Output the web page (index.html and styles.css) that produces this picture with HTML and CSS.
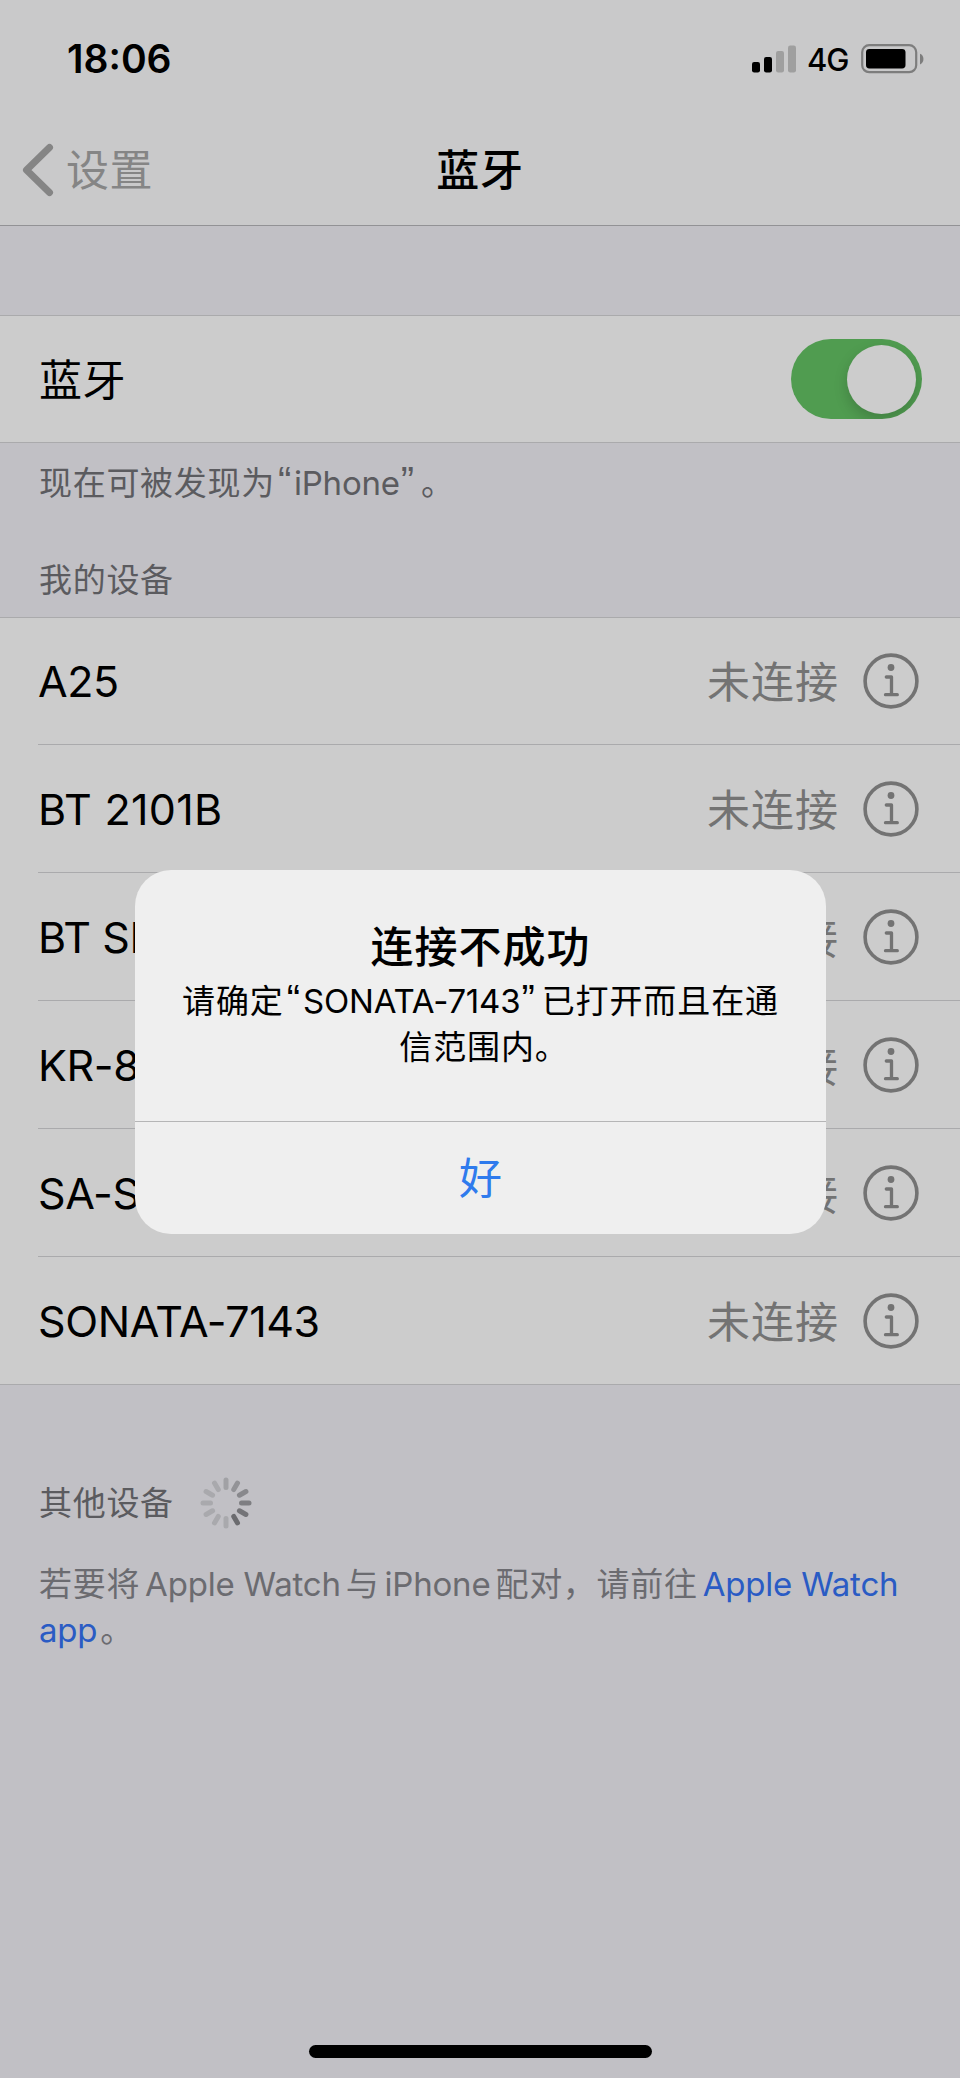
FILE: index.html
```html
<!DOCTYPE html>
<html lang="zh-CN">
<head>
<meta charset="utf-8">
<title>蓝牙</title>
<link rel="stylesheet" href="styles.css">
</head>
<body>
<svg class="defs" aria-hidden="true">
  <symbol id="info" viewBox="0 0 56 56">
    <circle cx="28" cy="28" r="25.9" fill="none" stroke="currentColor" stroke-width="3.6"/>
    <circle cx="28" cy="14.5" r="3.4" fill="currentColor"/>
    <path d="M23.3 24h5.200v17.700M22.500 41.700h11.800" fill="none" stroke="currentColor" stroke-width="3.300" stroke-linecap="round" stroke-linejoin="round"/>
  </symbol>
</svg>
<div class="screen">
  <header class="header">
    <div class="status">
      <span class="time">18:06</span>
      <div class="indicators">
        <svg class="signal" width="44" height="28" viewBox="0 0 44 28">
          <rect x="0" y="17" width="8" height="10.5" rx="2.2"/>
          <rect x="12" y="12" width="8" height="15.5" rx="2.2"/>
          <rect class="off" x="24" y="6" width="8" height="21.5" rx="2.2"/>
          <rect class="off" x="36" y="0.5" width="8" height="27" rx="2.2"/>
        </svg>
        <span class="network">4G</span>
        <svg class="battery" width="63" height="30" viewBox="0 0 63 30">
          <rect x="1.2" y="1.2" width="54" height="27" rx="7" fill="none" stroke="#7d7d7d" stroke-width="2.2"/>
          <rect x="5" y="5" width="39.5" height="19.5" rx="3.4" fill="#000"/>
          <path d="M59 9.8c4.6 1.6 4.6 9 0 10.600z" fill="#7d7d7d"/>
        </svg>
      </div>
    </div>
    <nav class="nav">
      <div class="back">
        <svg width="32" height="54" viewBox="0 0 32 54"><path d="M27.500 4.500L4.500 27l23 22.500" fill="none" stroke="currentColor" stroke-width="7" stroke-linecap="round" stroke-linejoin="round"/></svg>
        <span>设置</span>
      </div>
      <h1 class="title">蓝牙</h1>
    </nav>
  </header>
  <main>
    <section class="group toggle-row">
      <span class="toggle-label">蓝牙</span>
      <span class="switch"><span class="knob"></span></span>
    </section>
    <p class="note">现在可被发现为<span class="open">“</span><span class="lat">iPhone</span><span class="close">”</span>。</p>
    <h2 class="label">我的设备</h2>
    <ul class="group devices">
      <li class="device"><span class="name tight">A25</span><span class="state">未连接</span><svg class="info"><use href="#info"/></svg></li>
      <li class="device"><span class="name">BT 2101B</span><span class="state">未连接</span><svg class="info"><use href="#info"/></svg></li>
      <li class="device"><span class="name tight">BT SP</span><span class="state">未连接</span><svg class="info"><use href="#info"/></svg></li>
      <li class="device"><span class="name tight">KR-8</span><span class="state">未连接</span><svg class="info"><use href="#info"/></svg></li>
      <li class="device"><span class="name tight">SA-S</span><span class="state">未连接</span><svg class="info"><use href="#info"/></svg></li>
      <li class="device"><span class="name tight">SONATA-7143</span><span class="state">未连接</span><svg class="info"><use href="#info"/></svg></li>
    </ul>
    <div class="others">
      <h2 class="label">其他设备</h2>
      <svg class="spinner" width="52" height="52" viewBox="-26 -26 52 52" fill="none" stroke-width="5" stroke-linecap="round">
        <path d="M0-15.500V-23" stroke="#a1a1a5"/>
        <path d="M0-15.500V-23" stroke="#939397" transform="rotate(30)"/>
        <path d="M0-15.500V-23" stroke="#88888c" transform="rotate(60)"/>
        <path d="M0-15.500V-23" stroke="#7e7e82" transform="rotate(90)"/>
        <path d="M0-15.500V-23" stroke="#747478" transform="rotate(120)"/>
        <path d="M0-15.500V-23" stroke="#6b6b6f" transform="rotate(150)"/>
        <path d="M0-15.500V-23" stroke="#a9a9ad" transform="rotate(180)"/>
        <path d="M0-15.500V-23" stroke="#a9a9ad" transform="rotate(210)"/>
        <path d="M0-15.500V-23" stroke="#a9a9ad" transform="rotate(240)"/>
        <path d="M0-15.500V-23" stroke="#a9a9ad" transform="rotate(270)"/>
        <path d="M0-15.500V-23" stroke="#a9a9ad" transform="rotate(300)"/>
        <path d="M0-15.500V-23" stroke="#a9a9ad" transform="rotate(330)"/>
      </svg>
    </div>
    <p class="watch">若要将<span class="gap"></span><span class="lat">Apple Watch</span><span class="gap"></span>与<span class="gap"></span><span class="lat">iPhone</span><span class="gap"></span>配对，请前往<span class="gap"></span><a class="lat">Apple Watch</a><br><a class="lat app">app</a>。</p>
  </main>
  <div class="alert" role="alertdialog">
    <div class="message">
      <h3>连接不成功</h3>
      <p>请确定<span class="open">“</span><span class="lat">SONATA-7143</span><span class="close">”</span>已打开而且在通<br><span class="tail">信范围内。</span></p>
    </div>
    <button class="ok">好</button>
  </div>
  <div class="home"></div>
</div>
</body>
</html>
```
FILE: styles.css
```css
* { box-sizing: border-box; margin: 0; padding: 0; }
body {
  font-family: Inter, "Noto Sans CJK SC", sans-serif;
  font-size: 43px;
  font-weight: 400;
  color: #000;
  background: #c1c0c5;
}
.defs { position: absolute; width: 0; height: 0; }
.screen { position: relative; width: 960px; height: 2078px; overflow: hidden; background: #c1c0c5; }
.header { height: 226px; background: #c9c9ca; border-bottom: 1px solid #929295; }
.status { display: flex; justify-content: space-between; height: 114px; padding: 29px 36px 0 67px; }
.time { font-size: 39px; font-weight: 600; line-height: 60px; }
.indicators { display: flex; height: 60px; align-items: center; }
.signal .off { fill: #9f9f9f; }
.network { width: 42px; margin: 2px 12px 0 11px; font-size: 31px; line-height: 40px; font-weight: 500; letter-spacing: -1px; }
.nav { display: grid; grid-template-columns: 1fr auto 1fr; align-items: center; height: 111px; padding: 0 22px; }
.back { display: flex; align-items: center; gap: 12px; color: #858585; letter-spacing: .5px; line-height: 60px; }
.title { font-size: 43px; font-weight: 500; line-height: 60px; letter-spacing: .8px; }
.group { background: #ccc; border-top: 1px solid #aaaaac; border-bottom: 1px solid #aaaaac; }
.toggle-row { display: flex; align-items: center; justify-content: space-between; height: 128px; margin-top: 89px; padding: 0 38px 0 39px; letter-spacing: .5px; }
.toggle-label { padding-bottom: 5px; }
.switch { display: flex; justify-content: flex-end; width: 131px; height: 80px; padding: 6px; border-radius: 40px; background: #509c50; overflow: hidden; }
.knob { width: 69px; height: 69px; border-radius: 50%; background: #ccc; box-shadow: 0 6px 14px rgba(0, 0, 0, .18); }
.note, .label, .watch { font-size: 33px; font-weight: 400; color: #5b5b5f; letter-spacing: .7px; line-height: 46px; }
.note { margin: 17px 0 0 39px; }
.note + .label { margin: 51px 0 0 39px; }
.lat { letter-spacing: -.2px; }
.open, .close { font-family: "Liberation Sans", sans-serif; font-size: 40px; line-height: 1; }
.open { margin: 0 2px 0 3px; }
.close { margin: 0 6px 0 1px; }
.devices { list-style: none; margin-top: 14px; padding-left: 38px; }
.device { display: flex; align-items: center; height: 128px; padding-right: 41px; border-bottom: 1px solid #aaaaac; }
.device:first-child { height: 127px; }
.device:last-child { height: 127px; border-bottom: 0; }
.name { flex: 1; letter-spacing: .3px; }
.name.tight { letter-spacing: -.4px; }
.state { color: #737373; letter-spacing: 1px; margin-right: 24px; padding-bottom: 4px; }
.info { width: 56px; height: 56px; color: #737373; }
.others { display: flex; align-items: center; gap: 28px; margin: 92px 0 0 39px; }
.others .label { width: 133px; white-space: nowrap; }
.watch { margin: 32px 0 0 39px; color: #6b6b70; white-space: nowrap; }
.watch a { color: #2a5bc4; }
.watch .app { margin-right: 3px; }
.gap { display: inline-block; width: 5px; }
.alert { position: absolute; left: 135px; top: 870px; width: 691px; height: 364px; border-radius: 36px; background: #efefef; overflow: hidden; text-align: center; }
.message { height: 252px; padding-top: 47px; border-bottom: 1px solid #b5b5b6; }
.message h3 { margin-bottom: 1px; font-size: 43px; font-weight: 500; line-height: 60px; letter-spacing: 1px; }
.message p { font-size: 33px; line-height: 46px; letter-spacing: .9px; white-space: nowrap; }
.tail { padding-left: 7px; }
.ok { display: block; width: 100%; height: 112px; padding-bottom: 6px; border: 0; background: none; font: inherit; color: #2f7bed; }
.home { position: absolute; left: 309px; top: 2045px; width: 343px; height: 13px; border-radius: 7px; background: #000; }
```
